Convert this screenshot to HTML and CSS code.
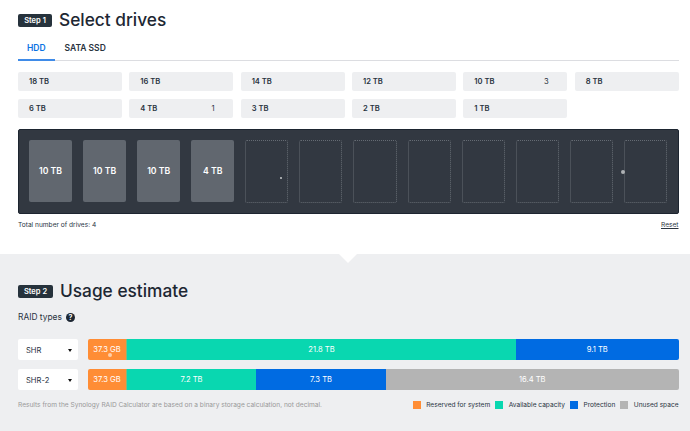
FILE: index.html
```html
<!DOCTYPE html>
<html lang="en">
<head>
<meta charset="utf-8">
<title>RAID Calculator</title>
<link rel="stylesheet" href="styles.css">
</head>
<body>
<main>
<section class="select">
  <header class="heading"><span class="step">Step 1</span><h1>Select drives</h1></header>
  <nav class="tabs"><a class="tab active">HDD</a><a class="tab">SATA SSD</a></nav>
  <div class="sizes">
    <div class="size"><span>18 TB</span></div>
    <div class="size"><span>16 TB</span></div>
    <div class="size"><span>14 TB</span></div>
    <div class="size"><span>12 TB</span></div>
    <div class="size"><span>10 TB</span><span class="count">3</span></div>
    <div class="size"><span>8 TB</span></div>
    <div class="size"><span>6 TB</span></div>
    <div class="size"><span>4 TB</span><span class="count">1</span></div>
    <div class="size"><span>3 TB</span></div>
    <div class="size"><span>2 TB</span></div>
    <div class="size"><span>1 TB</span></div>
  </div>
  <div class="bays">
    <div class="bay full">10 TB</div><div class="bay full">10 TB</div><div class="bay full">10 TB</div><div class="bay full">4 TB</div>
    <div class="bay"></div><div class="bay"></div><div class="bay"></div><div class="bay"></div>
    <div class="bay"></div><div class="bay"></div><div class="bay"></div><div class="bay"></div>
    <i class="dot dot-small"></i><i class="dot dot-large"></i>
  </div>
  <div class="summary"><span>Total number of drives: 4</span><a class="reset">Reset</a></div>
</section>
<section class="usage">
  <header class="heading"><span class="step step-two">Step 2</span><h1>Usage estimate</h1></header>
  <div class="types"><span>RAID types</span><span class="help">?</span></div>
  <div class="row">
    <div class="picker"><span>SHR</span><i class="caret"></i></div>
    <div class="bar">
      <div class="system">37.3 GB</div>
      <div class="available" style="width:389px">21.8 TB</div>
      <div class="protection" style="width:162.5px">9.1 TB</div>
    </div>
    <i class="dot dot-bar"></i>
  </div>
  <div class="row">
    <div class="picker"><span>SHR-2</span><i class="caret"></i></div>
    <div class="bar">
      <div class="system">37.3 GB</div>
      <div class="available" style="width:129px">7.2 TB</div>
      <div class="protection" style="width:130px">7.3 TB</div>
      <div class="unused" style="width:292.5px">16.4 TB</div>
    </div>
  </div>
  <footer class="footer">
    <span class="note">Results from the Synology RAID Calculator are based on a binary storage calculation, not decimal.</span>
    <div class="legend">
      <span class="key"><i class="system"></i>Reserved for system</span>
      <span class="key"><i class="available"></i>Available capacity</span>
      <span class="key"><i class="protection"></i>Protection</span>
      <span class="key"><i class="unused"></i>Unused space</span>
    </div>
  </footer>
</section>
</main>
</body>
</html>
```
FILE: styles.css
```css
* { box-sizing: border-box; }
body {
  margin: 0;
  background: #fff;
  color: #29333f;
  font-family: Inter, sans-serif;
  font-size: 7.6px;
}
main { height: 431px; overflow: hidden; }
.select { height: 254px; padding: 8px 11.5px 0 18px; }
.heading { display: flex; align-items: center; height: 24px; }
.step {
  width: 34px;
  height: 13px;
  margin-right: 7px;
  border-radius: 2px;
  background: #26323c;
  color: #fff;
  font-size: 7.5px;
  font-weight: 600;
  line-height: 13px;
  text-align: center;
}
.step-two { width: 35px; }
h1 { margin: 0; color: #1d2733; font-size: 17.3px; font-weight: 500; line-height: 24px; }
.tabs { display: flex; height: 29px; border-bottom: 1px solid #dcdde1; }
.tab { height: 29px; padding: 10px 9.5px 0; font-size: 8.5px; font-weight: 600; line-height: 12px; }
.active { width: 37px; padding: 10px 9px 0; border-bottom: 2px solid #3f8be8; color: #0a73e3; }
.sizes { display: grid; grid-template-columns: repeat(6, 1fr); gap: 7.5px; margin-top: 11px; }
.size {
  display: flex;
  align-items: center;
  justify-content: space-between;
  height: 19px;
  padding: 0 18.5px 0 11px;
  border-radius: 2px;
  background: #eeeff1;
  font-weight: 600;
}
.count { font-weight: 400; }
.bays {
  position: relative;
  display: grid;
  grid-template-columns: repeat(12, 1fr);
  gap: 11px;
  height: 85px;
  margin-top: 11px;
  padding: 10px 10.5px 10px 10px;
  border: 1px solid #1d2530;
  border-radius: 2px;
  background: #323841;
}
.bay {
  display: flex;
  align-items: center;
  justify-content: center;
  height: 63px;
  border: 1px dotted #656b73;
  border-radius: 2px;
}
.full { height: 62px; border: 0; background: #61676f; color: #fff; font-size: 8.7px; font-weight: 600; padding-top: 1px; }
.summary { display: flex; justify-content: space-between; margin-top: 6px; font-size: 6.6px; line-height: 10px; }
.reset { text-decoration: underline; }
.usage { position: relative; height: 177px; padding: 25px 11.5px 0 18px; background: #eeeff1; }
.usage::before {
  content: "";
  position: absolute;
  top: 0;
  left: 338.5px;
  border: solid transparent;
  border-width: 9.5px 9.5px 0;
  border-top-color: #fff;
}
.types { display: flex; align-items: center; gap: 4px; height: 10px; margin-top: 9px; font-size: 8.4px; }
.help {
  width: 9px;
  height: 9px;
  border-radius: 50%;
  background: #1d2733;
  color: #fff;
  font-size: 7px;
  font-weight: 700;
  line-height: 9px;
  text-align: center;
}
.row { position: relative; display: flex; justify-content: space-between; height: 21px; margin-top: 17px; }
.row + .row { margin-top: 9px; }
.picker {
  display: flex;
  align-items: center;
  justify-content: space-between;
  width: 60px;
  padding: 1px 6px 0 8px;
  border-radius: 2px;
  background: #fff;
}
.caret { border: solid transparent; border-width: 3px 2px 0; border-top-color: #111; }
.bar { display: flex; width: 590.5px; overflow: hidden; border-radius: 2px; color: #fff; line-height: 21px; text-align: center; }
.bar .system { width: 39px; border-right: 1px solid #87b878; }
.system { background: #ff8d35; }
.available { background: #09d7b0; }
.protection { background: #006be2; }
.unused { background: #b4b4b4; }
.footer { display: flex; align-items: center; justify-content: space-between; margin-top: 9px; height: 12px; font-size: 6.58px; white-space: nowrap; }
.note { color: #999; }
.legend { display: flex; gap: 5px; }
.key { display: flex; align-items: center; gap: 5.5px; }
.key i { width: 8px; height: 8px; }
.dot { position: absolute; border-radius: 50%; }
.dot-small { top: 47px; left: 261px; width: 2px; height: 2px; background: #c9cbcd; }
.dot-large { top: 40px; left: 602px; width: 4px; height: 4px; background: #aeb1b4; }
.dot-bar { top: 14px; left: 90px; width: 4px; height: 4px; background: #ffcfa8; }
```
